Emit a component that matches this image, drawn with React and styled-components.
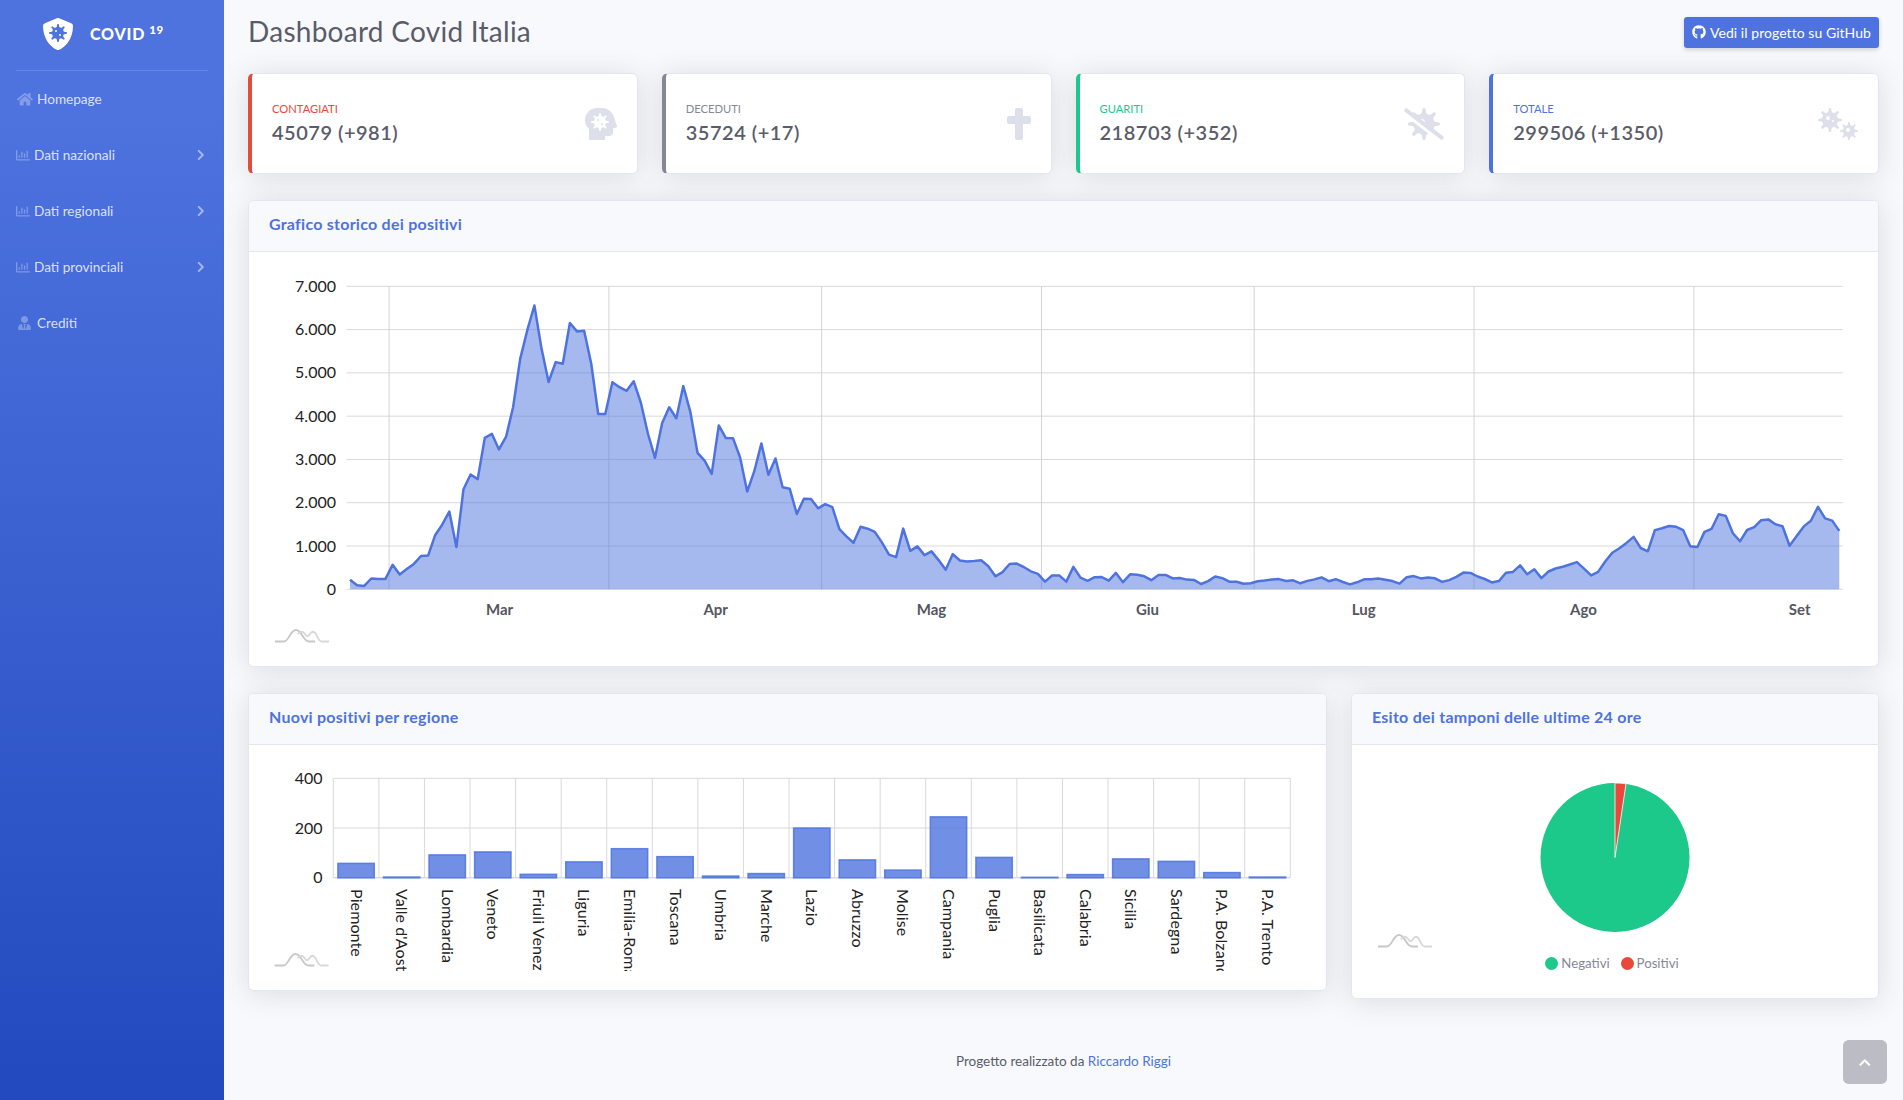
import React from "react";
import styled, { createGlobalStyle } from "styled-components";
import {
  FaHome,
  FaRegChartBar,
  FaUserTie,
  FaChevronRight,
  FaChevronUp,
  FaGithub,
  FaShieldVirus,
  FaHeadSideVirus,
  FaCross,
  FaVirusSlash,
  FaViruses,
} from "react-icons/fa";

const FONT = `Lato, "Open Sans", "Liberation Sans", sans-serif`;

const colors = {
  primary: "#4e73df",
  danger: "#e74a3b",
  secondary: "#858796",
  success: "#1cc88a",
  text: "#5a5c69",
};

const stats = [
  { label: "Contagiati", value: "45079 (+981)", tone: "danger", Icon: FaHeadSideVirus, iconWidth: 32 },
  { label: "Deceduti", value: "35724 (+17)", tone: "secondary", Icon: FaCross, iconWidth: 24 },
  { label: "Guariti", value: "218703 (+352)", tone: "success", Icon: FaVirusSlash, iconWidth: 40 },
  { label: "Totale", value: "299506 (+1350)", tone: "primary", Icon: FaViruses, iconWidth: 40 },
];

const navItems = [
  { label: "Homepage", Icon: FaHome, slot: 17, iconWidth: 16 },
  { label: "Dati nazionali", Icon: FaRegChartBar, slot: 14, iconWidth: 14, more: true },
  { label: "Dati regionali", Icon: FaRegChartBar, slot: 14, iconWidth: 14, more: true },
  { label: "Dati provinciali", Icon: FaRegChartBar, slot: 14, iconWidth: 14, more: true },
  { label: "Crediti", Icon: FaUserTie, slot: 17, iconWidth: 13 },
];

// nuovi positivi, un valore al giorno dal 24 febbraio
const positives = [
  221, 93, 78, 250, 238, 240,
  566, 342, 466, 587, 769, 778, 1247, 1492, 1797, 977, 2313, 2651, 2547, 3497, 3590, 3233, 3526, 4207, 5322, 5986, 6557, 5560, 4789, 5249, 5210, 6153, 5959, 5974, 5217, 4050, 4053,
  4782, 4668, 4585, 4805, 4316, 3599, 3039, 3836, 4204, 3951, 4694, 4092, 3153, 2972, 2667, 3786, 3493, 3491, 3047, 2256, 2729, 3370, 2646, 3021, 2357, 2324, 1739, 2091, 2086, 1872,
  1965, 1900, 1389, 1221, 1075, 1444, 1401, 1327, 1083, 802, 744, 1402, 888, 992, 789, 875, 675, 451, 813, 665, 642, 652, 669, 531, 300, 397, 584, 593, 516, 416, 355,
  178, 318, 321, 177, 518, 270, 197, 280, 283, 202, 379, 163, 346, 338, 301, 210, 329, 333, 251, 262, 224, 218, 122, 190, 296, 259, 175, 174, 126, 142,
  187, 201, 223, 235, 192, 208, 138, 193, 229, 276, 188, 234, 169, 114, 162, 230, 233, 249, 219, 190, 129, 280, 306, 252, 275, 255, 170, 212, 289, 386, 379,
  295, 239, 159, 190, 384, 402, 552, 347, 463, 259, 412, 481, 523, 574, 629, 479, 320, 403, 642, 845, 947, 1071, 1210, 953, 878, 1367, 1411, 1462, 1444, 1365, 996,
  978, 1326, 1397, 1733, 1695, 1297, 1108, 1370, 1434, 1597, 1616, 1501, 1458, 1008, 1229, 1452, 1585, 1907, 1638, 1587, 1350,
];

const regions = [
  ["Piemonte", 58], ["Valle d'Aosta", 3], ["Lombardia", 92], ["Veneto", 104], ["Friuli Venezia Giulia", 14],
  ["Liguria", 64], ["Emilia-Romagna", 117], ["Toscana", 85], ["Umbria", 7], ["Marche", 17], ["Lazio", 200],
  ["Abruzzo", 72], ["Molise", 31], ["Campania", 245], ["Puglia", 82], ["Basilicata", 2], ["Calabria", 13],
  ["Sicilia", 76], ["Sardegna", 66], ["P.A. Bolzano", 21], ["P.A. Trento", 3],
];

const monthStarts = [6, 37, 67, 98, 128, 159, 190];
const monthLabels = [
  ["Mar", 499.5], ["Apr", 715.7], ["Mag", 931.5], ["Giu", 1147.5], ["Lug", 1363.7], ["Ago", 1583.5], ["Set", 1799.7],
];

const LINE = { left: 346.5, right: 1842.8, top: 286.3, zero: 589.3 };
const cell = (LINE.right - LINE.left) / positives.length;
const lineX = (i) => LINE.left + cell * (i + 0.5);
const lineY = (v) => LINE.zero - (v / 7000) * (LINE.zero - LINE.top);

const BAR = { left: 333.3, right: 1290.3, top: 778.3, mid: 828, zero: 877.8 };
const barCell = (BAR.right - BAR.left) / regions.length;

const GlobalStyle = createGlobalStyle`
  html, body {
    margin: 0;
    padding: 0;
    background: #f8f9fc;
    font-family: ${FONT};
    color: ${colors.text};
  }
  * { box-sizing: border-box; }
`;

const Page = styled.div`
  display: flex;
  min-height: 1100px;
  overflow: hidden;
`;

const Sidebar = styled.aside`
  width: 224px;
  flex: none;
  background: linear-gradient(180deg, #4e73df 10%, #224abe 100%);
`;

const Brand = styled.div`
  height: 70px;
  display: flex;
  align-items: center;
  gap: 16px;
  padding: 0 0 2px 42px;
  color: #fff;
  font-size: 32px;
`;

const BrandName = styled.span`
  font-size: 16px;
  font-weight: 900;
  letter-spacing: 0.8px;
  text-transform: uppercase;
  line-height: 1;

  sup {
    font-size: 11.5px;
    margin-left: 4px;
    vertical-align: 6px;
    line-height: 0;
  }
`;

const Divider = styled.hr`
  margin: 0 16px;
  border: 0;
  border-top: 1px solid rgba(255, 255, 255, 0.15);
`;

const NavItem = styled.a`
  height: 56px;
  display: flex;
  align-items: center;
  padding: 0 20px 0 16px;
  font-size: 13.6px;
  color: rgba(255, 255, 255, 0.8);
`;

const NavIcon = styled.span`
  width: ${(p) => p.$slot}px;
  margin-right: 4px;
  flex: none;
  display: flex;
  justify-content: center;
  color: rgba(255, 255, 255, 0.3);

  svg {
    width: ${(p) => p.$iconWidth}px;
    height: 14.4px;
  }
`;

const NavArrow = styled(FaChevronRight)`
  margin-left: auto;
  width: 7.5px;
  height: 12px;
  color: rgba(255, 255, 255, 0.5);
`;

const Main = styled.main`
  flex: 1;
  min-width: 0;
  display: flex;
  flex-direction: column;
  padding: 17px 24px 0;
`;

const Topbar = styled.header`
  display: flex;
  align-items: center;
  justify-content: space-between;
  height: 31px;
  margin-bottom: 25px;
`;

const Title = styled.h1`
  margin: 0 0 2px;
  font-size: 28px;
  font-weight: 400;
  letter-spacing: 0.27px;
  line-height: 1.2;
  color: ${colors.text};
`;

const GithubButton = styled.a`
  width: 195px;
  height: 31px;
  display: flex;
  align-items: center;
  justify-content: center;
  gap: 4px;
  padding: 0 0 1px;
  border-radius: 3.2px;
  background: ${colors.primary};
  color: #fff;
  font-size: 14px;
  letter-spacing: 0.05px;
  box-shadow: 0 2px 4px rgba(58, 59, 69, 0.2);
`;

const StatGrid = styled.section`
  display: grid;
  grid-template-columns: repeat(4, 1fr);
  gap: 24px;
  margin-bottom: 26px;
`;

const Card = styled.div`
  background: #fff;
  border: 1px solid #e3e6f0;
  border-radius: 5.6px;
  box-shadow: 0 2.4px 28px rgba(58, 59, 69, 0.15);
  overflow: hidden;
`;

const StatCard = styled(Card)`
  height: 101px;
  display: flex;
  align-items: center;
  justify-content: space-between;
  padding: 0 20px;
  border-left: 4px solid ${(p) => colors[p.$tone]};
`;

const StatText = styled.div`
  padding-bottom: 1px;
`;

const StatLabel = styled.div`
  font-size: 11.2px;
  line-height: 1.2;
  text-transform: uppercase;
  margin-bottom: 5px;
  color: ${(p) => colors[p.$tone]};
`;

const StatValue = styled.div`
  font-size: 20px;
  font-weight: 600;
  letter-spacing: 0.5px;
  line-height: 1.2;
  color: ${colors.text};
`;

const StatIcon = styled.div`
  display: flex;
  color: #dddfeb;

  svg {
    width: ${(p) => p.$width}px;
    height: 32px;
  }
`;

const CardHeader = styled.div`
  height: 51px;
  display: flex;
  align-items: center;
  padding: 0 20px 6px;
  background: #f8f9fc;
  border-bottom: 1px solid #e3e6f0;
  font-size: 16px;
  font-weight: 700;
  letter-spacing: 0.25px;
  color: ${colors.primary};
`;

const ChartSvg = styled.svg`
  display: block;
  width: 100%;
  font-family: ${FONT};
`;

const LineCard = styled(Card)`
  height: 467px;
  margin-bottom: 26px;
`;

const BottomRow = styled.section`
  display: grid;
  grid-template-columns: 1079fr 528fr;
  gap: 24px;
  align-items: start;
`;

const BarCard = styled(Card)`
  height: 298px;
`;

const PieCard = styled(Card)`
  height: 306px;
`;

const Legend = styled.div`
  display: flex;
  justify-content: center;
  gap: 11px;
  padding-right: 6px;
  font-size: 13.2px;
  line-height: 22px;
  color: ${colors.secondary};
`;

const LegendItem = styled.div`
  display: flex;
  align-items: center;
  gap: 3px;

  &::before {
    content: "";
    width: 13px;
    height: 13px;
    border-radius: 50%;
    background: ${(p) => colors[p.$tone]};
  }
`;

const Footer = styled.footer`
  margin-top: 46px;
  text-align: center;
  font-size: 13.5px;
  line-height: 32px;
  color: ${colors.text};

  a {
    color: ${colors.primary};
  }
`;

const ScrollTop = styled.a`
  position: fixed;
  right: 16px;
  bottom: 16px;
  width: 44px;
  height: 44px;
  display: flex;
  align-items: center;
  justify-content: center;
  border-radius: 5.6px;
  background: rgba(90, 92, 105, 0.38);
  color: #fff;

  svg {
    width: 11.5px;
    height: 13px;
  }
`;

function AmLogo({ x, y }) {
  return (
    <g transform={`translate(${x} ${y})`} fill="none" strokeWidth="1.8">
      <path d="M0 12.5 H9 C14 12.5 15 1 21 1 C27 1 28 12.5 34 12.5 H40" stroke="#c8c8c8" />
      <path d="M23 5 C26 2 28 2 30 5 C32 8 33 8 35 5 C37 2 39 2 41 5 C43 9 44 12.5 47 12.5 H54" stroke="#d8d8d8" />
    </g>
  );
}

function LineChart() {
  const points = positives.map((v, i) => `${lineX(i).toFixed(1)},${lineY(v).toFixed(1)}`);
  const area = `M${lineX(0).toFixed(1)},${LINE.zero} L${points.join(" L")} L${lineX(positives.length - 1).toFixed(1)},${LINE.zero} Z`;
  return (
    <ChartSvg viewBox="249 252 1629 414" height="414">
      {[0, 1, 2, 3, 4, 5, 6, 7].map((k) => (
        <g key={k}>
          <line x1={LINE.left} x2={LINE.right} y1={lineY(k * 1000)} y2={lineY(k * 1000)} stroke="#d9d9d9" />
          <text x="336" y={lineY(k * 1000) + 5.5} textAnchor="end" fontSize="16" fill="#222">
            {k === 0 ? "0" : `${k}.000`}
          </text>
        </g>
      ))}
      {monthStarts.map((i) => {
        const x = LINE.left + cell * i;
        return <line key={i} x1={x} x2={x} y1={LINE.top} y2={LINE.zero} stroke="#d4d4d4" />;
      })}
      <path d={area} fill={colors.primary} fillOpacity="0.5" />
      <polyline points={points.join(" ")} fill="none" stroke={colors.primary} strokeWidth="2.5" strokeLinejoin="round" />
      {monthLabels.map(([label, x]) => (
        <text key={label} x={x} y="615" textAnchor="middle" fontSize="15" fontWeight="700" fill="#55565f">
          {label}
        </text>
      ))}
      <AmLogo x={275} y={629} />
    </ChartSvg>
  );
}

function BarChart() {
  return (
    <ChartSvg viewBox="249 745 1077 245" height="245">
      <defs>
        <clipPath id="region-labels">
          <rect x="320" y="885" width="980" height="86" />
        </clipPath>
      </defs>
      {[
        [BAR.top, "400"],
        [BAR.mid, "200"],
        [BAR.zero, "0"],
      ].map(([y, label]) => (
        <g key={label}>
          <line x1={BAR.left} x2={BAR.right} y1={y} y2={y} stroke={label === "0" ? "#c8c8c8" : "#d9d9d9"} />
          <text x="322.5" y={y + 5.5} textAnchor="end" fontSize="16" fill="#222">
            {label}
          </text>
        </g>
      ))}
      {regions.map((_, i) => (
        <line key={i} x1={BAR.left + barCell * i} x2={BAR.left + barCell * i} y1={BAR.top} y2={BAR.zero} stroke="#d9d9d9" />
      ))}
      <line x1={BAR.right} x2={BAR.right} y1={BAR.top} y2={BAR.zero} stroke="#d9d9d9" />
      {regions.map(([name, v], i) => {
        const h = v * ((BAR.zero - BAR.top) / 400);
        return (
          <rect
            key={name}
            x={BAR.left + barCell * i + 4.6}
            y={BAR.zero - h}
            width={barCell - 9.2}
            height={h}
            fill={colors.primary}
            fillOpacity="0.8"
            stroke={colors.primary}
            strokeOpacity="0.85"
            strokeWidth="1.5"
          />
        );
      })}
      <g clipPath="url(#region-labels)">
        {regions.map(([name], i) => {
          const x = BAR.left + barCell * (i + 0.5) + 1;
          return (
            <text
              key={name}
              x={x}
              y="889"
              transform={`rotate(90 ${x} 889)`}
              dominantBaseline="central"
              fontSize="16"
              letterSpacing="0.1"
              fill="#222"
            >
              {name}
            </text>
          );
        })}
      </g>
      <AmLogo x={274.5} y={953} />
    </ChartSvg>
  );
}

function PieChart() {
  const cx = 1615;
  const cy = 857.5;
  const r = 74.5;
  const angle = (8.5 * Math.PI) / 180;
  const ex = cx + r * Math.sin(angle);
  const ey = cy - r * Math.cos(angle);
  return (
    <ChartSvg viewBox="1352 745 526 207" height="207">
      <circle cx={cx} cy={cy} r={r} fill={colors.success} />
      <path
        d={`M${cx} ${cy} L${cx} ${cy - r} A${r} ${r} 0 0 1 ${ex} ${ey} Z`}
        fill={colors.danger}
        stroke="#fff"
        strokeWidth="0.8"
      />
      <AmLogo x={1378} y={934} />
    </ChartSvg>
  );
}

export default function App() {
  return (
    <Page>
      <GlobalStyle />
      <Sidebar>
        <Brand>
          <FaShieldVirus />
          <BrandName>
            Covid<sup>19</sup>
          </BrandName>
        </Brand>
        <Divider />
        {navItems.map(({ label, Icon, slot, iconWidth, more }) => (
          <NavItem key={label}>
            <NavIcon $slot={slot} $iconWidth={iconWidth}>
              <Icon />
            </NavIcon>
            {label}
            {more && <NavArrow />}
          </NavItem>
        ))}
      </Sidebar>
      <Main>
        <Topbar>
          <Title>Dashboard Covid Italia</Title>
          <GithubButton>
            <FaGithub /> Vedi il progetto su GitHub
          </GithubButton>
        </Topbar>
        <StatGrid>
          {stats.map(({ label, value, tone, Icon, iconWidth }) => (
            <StatCard key={label} $tone={tone}>
              <StatText>
                <StatLabel $tone={tone}>{label}</StatLabel>
                <StatValue>{value}</StatValue>
              </StatText>
              <StatIcon $width={iconWidth}>
                <Icon />
              </StatIcon>
            </StatCard>
          ))}
        </StatGrid>
        <LineCard>
          <CardHeader>Grafico storico dei positivi</CardHeader>
          <LineChart />
        </LineCard>
        <BottomRow>
          <BarCard>
            <CardHeader>Nuovi positivi per regione</CardHeader>
            <BarChart />
          </BarCard>
          <PieCard>
            <CardHeader>Esito dei tamponi delle ultime 24 ore</CardHeader>
            <PieChart />
            <Legend>
              <LegendItem $tone="success">Negativi</LegendItem>
              <LegendItem $tone="danger">Positivi</LegendItem>
            </Legend>
          </PieCard>
        </BottomRow>
        <Footer>
          Progetto realizzato da <a>Riccardo Riggi</a>
        </Footer>
      </Main>
      <ScrollTop>
        <FaChevronUp />
      </ScrollTop>
    </Page>
  );
}
